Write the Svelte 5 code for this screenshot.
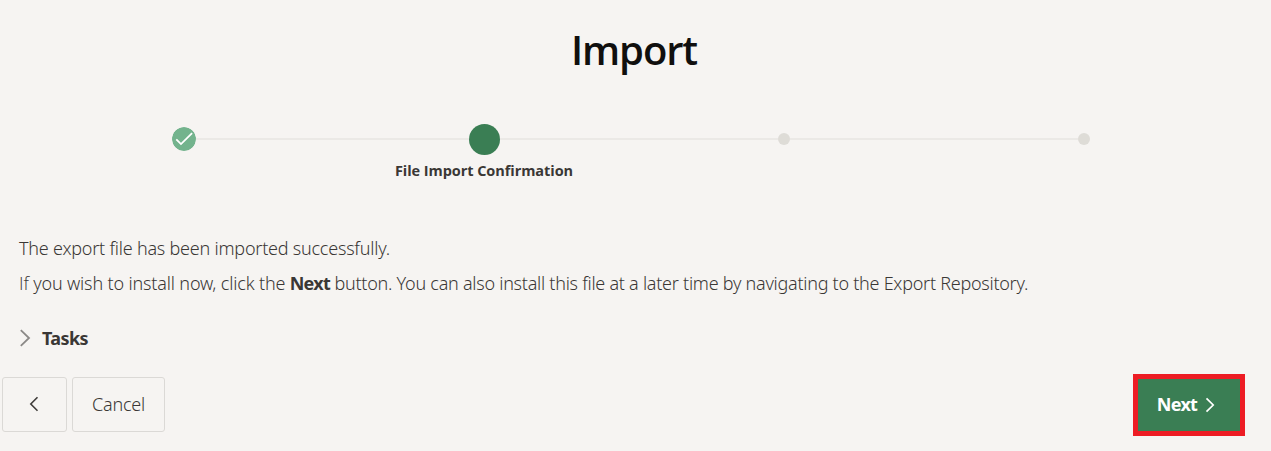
<script>
  const steps = [
    { state: 'done', label: '' },
    { state: 'current', label: 'File Import Confirmation' },
    { state: 'pending', label: '' },
    { state: 'pending', label: '' }
  ];
</script>

<main class="wizard">
  <h1><span>Import</span></h1>

  <ol class="progress">
    {#each steps as step}
      <li class="step {step.state}">
        <div class="marker">
          {#if step.state === 'done'}
            <svg class="dot" width="24" height="24" viewBox="0 0 24 24">
              <circle cx="12" cy="12" r="12" fill="#73b38d" />
              <path d="M4.3 12.3 9 17.1 20.1 6.2" fill="none" stroke="#fff" stroke-width="1.8" />
            </svg>
          {:else}
            <span class="dot"></span>
          {/if}
        </div>
        {#if step.label}<span class="label">{step.label}</span>{/if}
      </li>
    {/each}
  </ol>

  <section class="body">
    <p>The export file has been imported successfully.</p>
    <p><span class="lead"><span class="plain">If</span> you wish to install now, click the</span> <b>Next</b> button. You can also install this file at a later time by navigating to the Export Repository.</p>
  </section>

  <div class="tasks">
    <svg width="12" height="18" viewBox="0 0 12 18"><path d="M1.8 1.2 10 9 1.8 16.8" fill="none" stroke="#8b8987" stroke-width="1.8" /></svg>
    <h2>Tasks</h2>
  </div>

  <footer>
    <button class="back" aria-label="Previous">
      <svg width="10" height="16" viewBox="0 0 10 16"><path d="M8.5 1.3 1.8 8l6.7 6.7" fill="none" stroke="#3f3c3a" stroke-width="1.6" /></svg>
    </button>
    <button class="cancel"><span>Cancel</span></button>
    <button class="next">
      <span>Next</span>
      <svg width="10" height="16" viewBox="0 0 10 16"><path d="M1.5 1.3 8.2 8l-6.7 6.7" fill="none" stroke="#fff" stroke-width="1.7" /></svg>
    </button>
  </footer>
</main>

<style>
  :global(body) { background: #f6f4f2; overflow: hidden; }
  .wizard {
    width: 1271px;
    height: 451px;
    box-sizing: border-box;
    padding-top: 23px;
    background: #f6f4f2;
    color: #3a3735;
    font: 300 18px/35px "Noto Sans", sans-serif;
    white-space: nowrap;
  }
  h1 {
    margin: 0;
    width: 1268px;
    height: 54px;
    text-align: center;
    color: #100f0e;
    font-family: "Open Sans", sans-serif;
    font-size: 40px;
    line-height: 54px;
    font-weight: 600;
  }
  h1 span { letter-spacing: -1.1px; }
  .progress {
    display: grid;
    grid-template-columns: repeat(4, 300px);
    list-style: none;
    margin: 46px 0 0 34px;
    padding: 0;
    height: 62px;
  }
  .step { display: flex; flex-direction: column; align-items: center; }
  .marker { display: flex; width: 100%; height: 32px; align-items: center; }
  .marker::before, .marker::after { content: ""; flex: 1; height: 2px; background: #ebe9e6; }
  .step:first-child .marker::before, .step:last-child .marker::after { background: transparent; }
  .dot { flex: none; border-radius: 50%; width: 12px; height: 12px; background: #dedcd7; }
  .done .dot { width: 24px; height: 24px; background: none; }
  .current .dot { width: 31px; height: 31px; background: #3a7e54; }
  .label { font-family: "Open Sans", sans-serif; font-size: 14.5px; line-height: 32px; font-weight: 700; letter-spacing: -0.06px; }
  .body { padding: 46px 0 0 19px; letter-spacing: -0.26px; }
  p:first-child { letter-spacing: -0.22px; }
  .lead { letter-spacing: -0.16px; }
  .plain { font-family: "Open Sans", sans-serif; }
  p { margin: 0; height: 35px; }
  b { font-weight: 700; letter-spacing: -0.7px; }
  .tasks { display: flex; align-items: center; height: 36px; margin-top: 19px; padding-left: 19px; gap: 11px; }
  h2 { margin: 0; font-size: 18px; font-weight: 700; line-height: 36px; letter-spacing: -0.6px; }
  footer { display: flex; align-items: center; height: 62px; margin-top: 18px; padding: 0 26px 0 2px; }
  button { box-sizing: border-box; display: flex; align-items: center; justify-content: center; padding: 0; color: inherit; font: inherit; background: transparent; }
  .back, .cancel { height: 55px; border: 1px solid #dbd9d6; border-radius: 3px; margin-bottom: 1px; }
  .back { width: 65px; margin-right: 5px; padding: 0 2px 1px 0; }
  .cancel { width: 93px; letter-spacing: -0.2px; }
  .next { width: 112px; height: 62px; margin-left: auto; border: 5px solid #ed1c24; background: #3a7e54; color: #fff; font-weight: 700; gap: 8px; letter-spacing: -0.7px; padding: 0 6px 1px 0; }
</style>
